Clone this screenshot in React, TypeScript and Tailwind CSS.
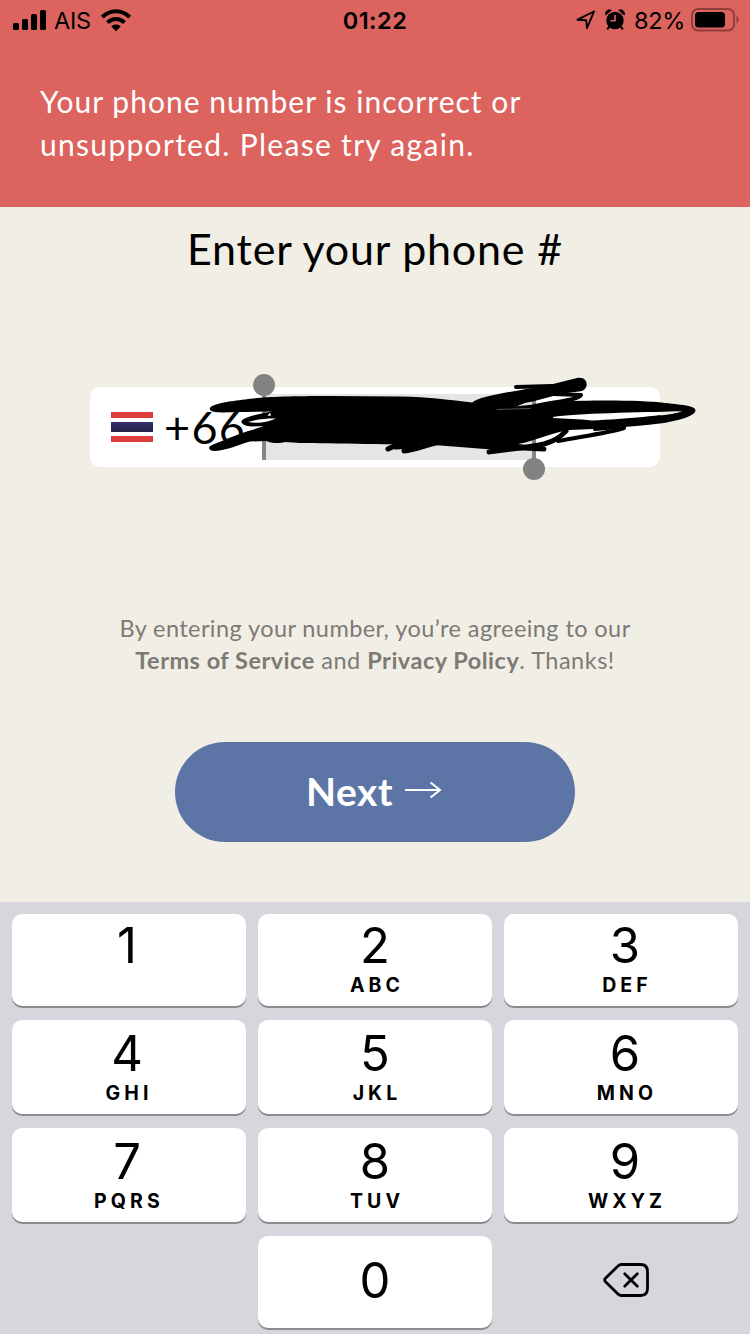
import React from "react";

const UI = "font-['Inter','Liberation_Sans',sans-serif]";
const BODY = "font-['Lato','Open_Sans',sans-serif]";

function StatusBar() {
  return (
    <div className={`flex h-10 items-center justify-between pl-[13px] pr-[11px] text-black ${UI}`}>
      <div className="flex w-[200px] items-center">
        <svg width="34" height="22" viewBox="0 0 34 22">
          <rect x="0" y="14" width="6" height="7" rx="1.5" />
          <rect x="9" y="10" width="6" height="11" rx="1.5" />
          <rect x="18" y="5" width="6" height="16" rx="1.5" />
          <rect x="27" y="1" width="6" height="20" rx="1.5" />
        </svg>
        <span className="ml-[7px] w-[38px] pt-px text-[23.5px] leading-10 tracking-[-0.3px]">AIS</span>
        <svg className="ml-[8px]" width="32" height="24" viewBox="0 0 32 24" fill="none" stroke="#000" strokeWidth="4">
          <path d="M2.3 9.2C10 1.2 22 1.2 29.7 9.2" />
          <path d="M7.5 14.6C12.5 9.8 19.5 9.8 24.5 14.6" />
          <path d="M11.3 18.4C14 16 18 16 20.7 18.4L16 23.2Z" fill="#000" stroke="none" />
        </svg>
      </div>
      <div className="pt-px pr-[2px] text-[23.5px] font-semibold leading-10 tracking-[0.5px]">01:22</div>
      <div className="flex w-[200px] items-center justify-end">
        <svg width="20" height="20" viewBox="0 0 20 20" fill="none" stroke="#000" strokeWidth="1.9" strokeLinejoin="round">
          <path d="M1.5 9.7L18 1.5L11 18.2L10.2 10.2Z" />
        </svg>
        <svg className="ml-[9px]" width="20" height="22" viewBox="0 0 20 22">
          <circle cx="10" cy="11.5" r="8.7" />
          <path d="M.7 6A4 4 0 0 1 6.4 1.2ZM19.3 6A4 4 0 0 0 13.6 1.2Z" stroke="#000" strokeWidth="0.8" />
          <path d="M4.5 17L2.2 20.5M15.5 17L17.8 20.5" stroke="#000" strokeWidth="2" />
          <path d="M10 6V11.8H5.5" fill="none" stroke="#dc635e" strokeWidth="1.6" />
        </svg>
        <span className="ml-[9px] pt-px text-[23.5px] leading-10 tracking-[-0.3px]">82%</span>
        <svg className="ml-[6px]" width="48" height="24" viewBox="0 0 48 24">
          <rect x="1" y="1" width="42" height="21.5" rx="6" fill="none" stroke="#8f3e3b" strokeWidth="2" />
          <rect x="4" y="4" width="30" height="15.5" rx="3.5" />
          <path d="M45.5 8C48.3 9.5 48.3 14 45.5 15.5Z" fill="#8f3e3b" />
        </svg>
      </div>
    </div>
  );
}

function Flag() {
  return (
    <div className="flex h-[30px] w-[42px] flex-col">
      <div className="h-[6px] bg-[#db3c3c]" />
      <div className="h-[4px] bg-white" />
      <div className="h-[10px] bg-linear-to-b from-[#322f6c] to-[#242049]" />
      <div className="h-[4px] bg-white" />
      <div className="h-[6px] bg-[#db3c3c]" />
    </div>
  );
}

function Scribble() {
  return (
    <svg className="absolute -left-[10px] -top-[27px]" width="630" height="130" viewBox="80 360 630 130" strokeLinecap="round" strokeLinejoin="round">
      <path d="M210 408C212 404 230 401 245 399.500C262 397 285 396 330 396L400 396.500C430 397 450 400 472 402.500L500 408L556 402C590 400 640 400 665 403C685 405 695.500 406 695.500 410.500C695 416 680 420 664 423C630 427 600 429 570 430C550 433 535 441 518 444L545 447L510 451L485 449L434 445C400 444.500 330 443.500 300 443L285 442C279 444 270 443 266 441L250 441.500C238 445 228 450 215 451C209 451 207 447 212 445C225 440 240 433 252 430L264 426L252 426.500C243 426 239 422 243 419.500C250 415.500 262 413.500 272 411.500L245 412C230 412 222 413 215 412C211 411 209 410 210 408Z" />
      <path d="M553 417C575 413.500 640 412 682 411.500C665 415.500 625 419 592 420.500C580 419 565 419 553 418Z" fill="#fff" />
      <path d="M660.500 412L682 411.500C675 413.500 668 414.500 660.500 415.500Z" fill="#f1eee5" />
      <path d="M248 422C256 419.500 263 418.500 276 418.500C270 421.500 258 424 248 422ZM267.500 416L270 412.500L271 415.500Z" fill="#fff" />
      <path d="M472 402.500C480 396 515 391 545 386L577 378C589 375 590 391 579 391.500C560 393 545 399 525 403L510 409L485 410Z" />
      <path d="M516 387L552 386" fill="none" stroke="#000" strokeWidth="4" />
      <path d="M553 394L581 395C578 400 560 401 535 406" fill="none" stroke="#000" strokeWidth="4" />
      <path d="M624 428C608 433 585 436 558 441" fill="none" stroke="#000" strokeWidth="4" />
      <path d="M624 426.500L595 429" fill="none" stroke="#000" strokeWidth="4" />
      <path d="M566 431C560 437 555 441 544 444C530 447 512 449 489 452" fill="none" stroke="#000" strokeWidth="5" />
      <path d="M505 447L544 449" fill="none" stroke="#000" strokeWidth="5" />
      <path d="M388 449C395 445 405 443 414 441M404 451C416 450 425 445 440 442M395 447L418 446" fill="none" stroke="#000" strokeWidth="5" />
      <path d="M497 409.500L530 408.500" stroke="#777" strokeWidth="0.700" />
    </svg>
  );
}

function PhoneField() {
  return (
    <div className="relative mx-[90px] mt-[102px] flex h-20 items-center rounded-[10px] bg-white pl-[21px]">
      <Flag />
      <span className="ml-[11px] text-[45px] leading-[80px] tracking-[1.3px] font-['Lato',sans-serif]">+66</span>
      <div className="absolute left-[172px] top-[7px] h-[66px] w-[274px] border-x-4 border-[#858585] bg-[#e5e5e5]" />
      <div className="absolute left-[163px] top-[-13px] size-[22px] rounded-full bg-[#828282]" />
      <div className="absolute left-[433px] top-[71px] size-[22px] rounded-full bg-[#828282]" />
      <Scribble />
    </div>
  );
}

const KEYS = [
  ["1", ""], ["2", "ABC"], ["3", "DEF"],
  ["4", "GHI"], ["5", "JKL"], ["6", "MNO"],
  ["7", "PQRS"], ["8", "TUV"], ["9", "WXYZ"],
];

const COLUMN_PADDING = ["pr-[4px]", "", "pl-[8px]"];
const ROW_PADDING = ["pt-[3px]", "pt-[5px]", "pt-[5px]"];

function Key({ digit, letters, index }: { digit: string; letters: string; index: number }) {
  return (
    <div className={`flex flex-col items-center rounded-[10px] bg-white shadow-[0_2px_0_#8b8c8f] ${COLUMN_PADDING[index % 3]} ${ROW_PADDING[Math.floor(index / 3)]}`}>
      <div className="h-[58px] text-[49px] leading-[58px]">{digit}</div>
      <div className="pl-[4px] text-[19.5px] font-bold leading-[20px] tracking-[4.1px]">{letters}</div>
    </div>
  );
}

function Keypad() {
  return (
    <div className={`grid h-[432px] grid-cols-3 grid-rows-[92px_94px_94px_92px] gap-x-3 gap-y-[14px] bg-[#d6d7dc] px-3 pt-3 text-black ${UI}`}>
      {KEYS.map(([digit, letters], index) => (
        <Key key={digit} digit={digit} letters={letters} index={index} />
      ))}
      <div />
      <div className="flex items-center justify-center rounded-[10px] bg-white pb-[2px] text-[49px] shadow-[0_2px_0_#8b8c8f]">0</div>
      <div className="flex items-center justify-center pl-[10px] pb-[4px]">
        <svg width="46" height="34" viewBox="0 0 46 34" fill="none" stroke="#000" strokeWidth="2.800" strokeLinecap="round" strokeLinejoin="round">
          <path d="M18.500 1.500H37.500Q44.500 1.500 44.500 8.500V25.500Q44.500 32.500 37.500 32.500H18.500Q16.500 32.500 15 31L2.500 18.700Q.8 17 2.500 15.300L15 3Q16.500 1.500 18.500 1.500Z" />
          <path d="M21.700 10.700L34.300 23.300M34.300 10.700L21.700 23.300" />
        </svg>
      </div>
    </div>
  );
}

export default function App() {
  return (
    <div className={`flex h-[1334px] w-[750px] flex-col overflow-hidden bg-[#f1eee5] ${BODY}`}>
      <header className="h-[207px] bg-[#dc635e]">
        <StatusBar />
        <p className="pl-10 pt-[40px] text-[30px] leading-[43px] text-white">
          <span className="block whitespace-nowrap tracking-[1.03px]">Your phone number is incorrect or</span>
          <span className="block whitespace-nowrap tracking-[1.3px]">unsupported. Please try again.</span>
        </p>
      </header>
      <main className="flex h-[695px] flex-col">
        <h1 className="mt-[18px] h-[60px] whitespace-nowrap text-center text-[43px] leading-[48px] tracking-[0.8px] text-black">Enter your phone #</h1>
        <PhoneField />
        <p className="mt-[145px] text-center text-[23.500px] leading-[32px] text-[#7d7a75]">
          <span className="block whitespace-nowrap tracking-[0.42px]">By entering your number, you’re agreeing to our</span>
          <span className="block whitespace-nowrap tracking-[0.5px]"><b>Terms of Service</b> and <b>Privacy Policy</b>. Thanks!</span>
        </p>
        <button className="mx-auto mt-[66px] flex h-[100px] w-[400px] items-center justify-center rounded-full bg-[#5c75a6] pb-[2px] pr-[2px] text-[39px] font-bold leading-[98px] text-white">
          <span className="tracking-[0.5px]">Next</span>
          <svg className="ml-[12px] -mt-[2px]" width="37" height="18" viewBox="0 0 37 18" fill="none" stroke="#fff" strokeWidth="2">
            <path d="M0 9H35M25.500 1.500L35 9L25.500 16.500" />
          </svg>
        </button>
      </main>
      <Keypad />
    </div>
  );
}
